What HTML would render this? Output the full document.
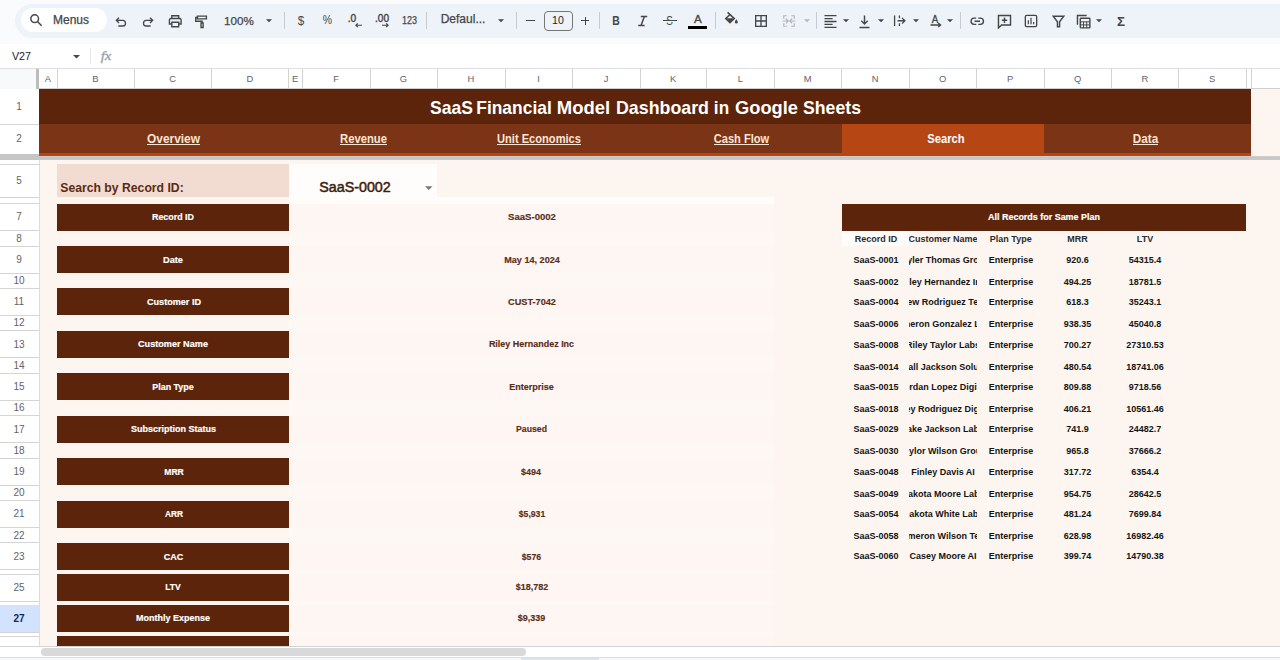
<!DOCTYPE html><html><head><meta charset="utf-8"><title>SaaS Financial Model Dashboard in Google Sheets</title><style>
*{margin:0;padding:0;box-sizing:border-box}
html,body{width:1280px;height:660px;overflow:hidden;background:#fdf6f0;font-family:"Liberation Sans",sans-serif}
#r{position:relative;width:1280px;height:660px;overflow:hidden}
#r div,#r svg{position:absolute}
.t{white-space:nowrap;text-align:center}
svg{overflow:visible}
</style></head><body><div id="r">
<div style="left:0px;top:0px;width:1280px;height:44px;background:#f9fbfd;"></div>
<div style="left:15px;top:3.5px;width:1280px;height:34.5px;background:#eef2f9;border-radius:17.25px 0 0 17.25px;"></div>
<div style="left:21px;top:8px;width:86px;height:24px;background:#fff;border-radius:12px;"></div>
<div style="left:0px;top:44px;width:1280px;height:24px;background:#fff;"></div>
<div style="left:0px;top:68px;width:1280px;height:592px;background:#fdf6f0;"></div>
<div style="left:0px;top:68px;width:1280px;height:20.5px;background:#fff;"></div>
<div style="left:0px;top:88.25px;width:1280px;height:0.75px;background:#cfcfcf;"></div>
<div style="left:0px;top:67.75px;width:1280px;height:1px;background:#dcdee1;"></div>
<div style="left:0px;top:68.5px;width:39px;height:592px;background:#fff;"></div>
<div style="left:56.5px;top:68.5px;width:1px;height:20px;background:#d3d3d3;"></div>
<div class="t" style="left:15.00px;top:71px;width:66px;height:15px;line-height:15px;font-size:9.4px;color:#5f6368;">A</div>
<div style="left:133.5px;top:68.5px;width:1px;height:20px;background:#d3d3d3;"></div>
<div class="t" style="left:62.50px;top:71px;width:66px;height:15px;line-height:15px;font-size:9.4px;color:#5f6368;">B</div>
<div style="left:211.0px;top:68.5px;width:1px;height:20px;background:#d3d3d3;"></div>
<div class="t" style="left:139.25px;top:71px;width:67px;height:15px;line-height:15px;font-size:9.4px;color:#5f6368;">C</div>
<div style="left:288.0px;top:68.5px;width:1px;height:20px;background:#d3d3d3;"></div>
<div class="t" style="left:216.50px;top:71px;width:67px;height:15px;line-height:15px;font-size:9.4px;color:#5f6368;">D</div>
<div style="left:301.5px;top:68.5px;width:1px;height:20px;background:#d3d3d3;"></div>
<div class="t" style="left:262.25px;top:71px;width:66px;height:15px;line-height:15px;font-size:9.4px;color:#5f6368;">E</div>
<div style="left:369.5px;top:68.5px;width:1px;height:20px;background:#d3d3d3;"></div>
<div class="t" style="left:303.00px;top:71px;width:66px;height:15px;line-height:15px;font-size:9.4px;color:#5f6368;">F</div>
<div style="left:436.5px;top:68.5px;width:1px;height:20px;background:#d3d3d3;"></div>
<div class="t" style="left:370.00px;top:71px;width:67px;height:15px;line-height:15px;font-size:9.4px;color:#5f6368;">G</div>
<div style="left:504.5px;top:68.5px;width:1px;height:20px;background:#d3d3d3;"></div>
<div class="t" style="left:437.50px;top:71px;width:67px;height:15px;line-height:15px;font-size:9.4px;color:#5f6368;">H</div>
<div style="left:571.5px;top:68.5px;width:1px;height:20px;background:#d3d3d3;"></div>
<div class="t" style="left:507.00px;top:71px;width:63px;height:15px;line-height:15px;font-size:9.4px;color:#5f6368;">I</div>
<div style="left:639.5px;top:68.5px;width:1px;height:20px;background:#d3d3d3;"></div>
<div class="t" style="left:573.50px;top:71px;width:65px;height:15px;line-height:15px;font-size:9.4px;color:#5f6368;">J</div>
<div style="left:706.0px;top:68.5px;width:1px;height:20px;background:#d3d3d3;"></div>
<div class="t" style="left:640.25px;top:71px;width:66px;height:15px;line-height:15px;font-size:9.4px;color:#5f6368;">K</div>
<div style="left:773.5px;top:68.5px;width:1px;height:20px;background:#d3d3d3;"></div>
<div class="t" style="left:707.75px;top:71px;width:65px;height:15px;line-height:15px;font-size:9.4px;color:#5f6368;">L</div>
<div style="left:841.0px;top:68.5px;width:1px;height:20px;background:#d3d3d3;"></div>
<div class="t" style="left:773.75px;top:71px;width:68px;height:15px;line-height:15px;font-size:9.4px;color:#5f6368;">M</div>
<div style="left:908.5px;top:68.5px;width:1px;height:20px;background:#d3d3d3;"></div>
<div class="t" style="left:841.75px;top:71px;width:67px;height:15px;line-height:15px;font-size:9.4px;color:#5f6368;">N</div>
<div style="left:976.0px;top:68.5px;width:1px;height:20px;background:#d3d3d3;"></div>
<div class="t" style="left:909.25px;top:71px;width:67px;height:15px;line-height:15px;font-size:9.4px;color:#5f6368;">O</div>
<div style="left:1043.5px;top:68.5px;width:1px;height:20px;background:#d3d3d3;"></div>
<div class="t" style="left:977.25px;top:71px;width:66px;height:15px;line-height:15px;font-size:9.4px;color:#5f6368;">P</div>
<div style="left:1111.0px;top:68.5px;width:1px;height:20px;background:#d3d3d3;"></div>
<div class="t" style="left:1044.25px;top:71px;width:67px;height:15px;line-height:15px;font-size:9.4px;color:#5f6368;">Q</div>
<div style="left:1178.0px;top:68.5px;width:1px;height:20px;background:#d3d3d3;"></div>
<div class="t" style="left:1111.50px;top:71px;width:67px;height:15px;line-height:15px;font-size:9.4px;color:#5f6368;">R</div>
<div style="left:1245.5px;top:68.5px;width:1px;height:20px;background:#d3d3d3;"></div>
<div class="t" style="left:1179.25px;top:71px;width:66px;height:15px;line-height:15px;font-size:9.4px;color:#5f6368;">S</div>
<div style="left:1250.5px;top:68.5px;width:1px;height:20px;background:#d3d3d3;"></div>
<div style="left:1289.5px;top:68.5px;width:1px;height:20px;background:#d3d3d3;"></div>
<div style="left:0px;top:68.5px;width:39px;height:20px;background:#f8f9fa;"></div>
<div style="left:36.25px;top:68.5px;width:2.5px;height:20.5px;background:#bdbdbd;"></div>
<div style="left:0px;top:123.5px;width:38.5px;height:1px;background:#d5d5d5;"></div>
<div class="t" style="left:-14.00px;top:99px;width:66px;height:15px;line-height:15px;font-size:10px;color:#5f6368;">1</div>
<div style="left:0px;top:153.5px;width:38.5px;height:1px;background:#d5d5d5;"></div>
<div class="t" style="left:-14.00px;top:131px;width:66px;height:15px;line-height:15px;font-size:10px;color:#5f6368;">2</div>
<div style="left:0px;top:164.0px;width:38.5px;height:1px;background:#d5d5d5;"></div>
<div style="left:0px;top:196.5px;width:38.5px;height:1px;background:#d5d5d5;"></div>
<div class="t" style="left:-14.00px;top:173px;width:66px;height:15px;line-height:15px;font-size:10px;color:#5f6368;">5</div>
<div style="left:0px;top:203.1px;width:38.5px;height:1px;background:#d5d5d5;"></div>
<div style="left:0px;top:230.1px;width:38.5px;height:1px;background:#d5d5d5;"></div>
<div class="t" style="left:-14.00px;top:209px;width:66px;height:15px;line-height:15px;font-size:10px;color:#5f6368;">7</div>
<div style="left:0px;top:245.52px;width:38.5px;height:1px;background:#d5d5d5;"></div>
<div class="t" style="left:-14.00px;top:231px;width:66px;height:15px;line-height:15px;font-size:10px;color:#5f6368;">8</div>
<div style="left:0px;top:272.52px;width:38.5px;height:1px;background:#d5d5d5;"></div>
<div class="t" style="left:-14.00px;top:252px;width:66px;height:15px;line-height:15px;font-size:10px;color:#5f6368;">9</div>
<div style="left:0px;top:287.94px;width:38.5px;height:1px;background:#d5d5d5;"></div>
<div class="t" style="left:-16.50px;top:273px;width:71px;height:15px;line-height:15px;font-size:10px;color:#5f6368;">10</div>
<div style="left:0px;top:314.94px;width:38.5px;height:1px;background:#d5d5d5;"></div>
<div class="t" style="left:-16.00px;top:294px;width:70px;height:15px;line-height:15px;font-size:10px;color:#5f6368;">11</div>
<div style="left:0px;top:330.36px;width:38.5px;height:1px;background:#d5d5d5;"></div>
<div class="t" style="left:-16.50px;top:315px;width:71px;height:15px;line-height:15px;font-size:10px;color:#5f6368;">12</div>
<div style="left:0px;top:357.36px;width:38.5px;height:1px;background:#d5d5d5;"></div>
<div class="t" style="left:-16.50px;top:337px;width:71px;height:15px;line-height:15px;font-size:10px;color:#5f6368;">13</div>
<div style="left:0px;top:372.78px;width:38.5px;height:1px;background:#d5d5d5;"></div>
<div class="t" style="left:-16.50px;top:358px;width:71px;height:15px;line-height:15px;font-size:10px;color:#5f6368;">14</div>
<div style="left:0px;top:399.78px;width:38.5px;height:1px;background:#d5d5d5;"></div>
<div class="t" style="left:-16.50px;top:379px;width:71px;height:15px;line-height:15px;font-size:10px;color:#5f6368;">15</div>
<div style="left:0px;top:415.2px;width:38.5px;height:1px;background:#d5d5d5;"></div>
<div class="t" style="left:-16.50px;top:400px;width:71px;height:15px;line-height:15px;font-size:10px;color:#5f6368;">16</div>
<div style="left:0px;top:442.2px;width:38.5px;height:1px;background:#d5d5d5;"></div>
<div class="t" style="left:-16.50px;top:422px;width:71px;height:15px;line-height:15px;font-size:10px;color:#5f6368;">17</div>
<div style="left:0px;top:457.62px;width:38.5px;height:1px;background:#d5d5d5;"></div>
<div class="t" style="left:-16.50px;top:443px;width:71px;height:15px;line-height:15px;font-size:10px;color:#5f6368;">18</div>
<div style="left:0px;top:484.62px;width:38.5px;height:1px;background:#d5d5d5;"></div>
<div class="t" style="left:-16.50px;top:464px;width:71px;height:15px;line-height:15px;font-size:10px;color:#5f6368;">19</div>
<div style="left:0px;top:500.04px;width:38.5px;height:1px;background:#d5d5d5;"></div>
<div class="t" style="left:-16.50px;top:485px;width:71px;height:15px;line-height:15px;font-size:10px;color:#5f6368;">20</div>
<div style="left:0px;top:527.04px;width:38.5px;height:1px;background:#d5d5d5;"></div>
<div class="t" style="left:-16.50px;top:506px;width:71px;height:15px;line-height:15px;font-size:10px;color:#5f6368;">21</div>
<div style="left:0px;top:542.46px;width:38.5px;height:1px;background:#d5d5d5;"></div>
<div class="t" style="left:-16.50px;top:528px;width:71px;height:15px;line-height:15px;font-size:10px;color:#5f6368;">22</div>
<div style="left:0px;top:569.46px;width:38.5px;height:1px;background:#d5d5d5;"></div>
<div class="t" style="left:-16.50px;top:549px;width:71px;height:15px;line-height:15px;font-size:10px;color:#5f6368;">23</div>
<div style="left:0px;top:573.5px;width:38.5px;height:1px;background:#d5d5d5;"></div>
<div style="left:0px;top:600.5px;width:38.5px;height:1px;background:#d5d5d5;"></div>
<div class="t" style="left:-16.50px;top:580px;width:71px;height:15px;line-height:15px;font-size:10px;color:#5f6368;">25</div>
<div style="left:0px;top:604.5px;width:38.5px;height:1px;background:#d5d5d5;"></div>
<div style="left:0px;top:605px;width:38.5px;height:27px;background:#d3e3fd;"></div>
<div style="left:0px;top:631.5px;width:38.5px;height:1px;background:#d5d5d5;"></div>
<div class="t" style="left:-16.50px;top:611px;width:71px;height:15px;line-height:15px;font-size:10px;font-weight:bold;color:#0b2a5c;">27</div>
<div style="left:0px;top:635.5px;width:38.5px;height:1px;background:#d5d5d5;"></div>
<div style="left:0px;top:659.5px;width:38.5px;height:1px;background:#d5d5d5;"></div>
<div style="left:38.5px;top:89px;width:1px;height:571px;background:#dcdcdc;"></div>
<div style="left:39px;top:89px;width:1211.5px;height:35px;background:#5b240b;"></div>
<div class="t" style="left:399.99px;top:95px;width:103px;height:25px;line-height:25px;font-size:18.4px;font-weight:bold;color:#fff;transform:scaleX(0.955);">SaaS</div>
<div class="t" style="left:446.26px;top:95px;width:136px;height:25px;line-height:25px;font-size:18.4px;font-weight:bold;color:#fff;transform:scaleX(0.947);">Financial</div>
<div class="t" style="left:527.24px;top:95px;width:113px;height:25px;line-height:25px;font-size:18.4px;font-weight:bold;color:#fff;transform:scaleX(1.006);">Model</div>
<div class="t" style="left:585.52px;top:95px;width:153px;height:25px;line-height:25px;font-size:18.4px;font-weight:bold;color:#fff;transform:scaleX(0.968);">Dashboard</div>
<div class="t" style="left:684.34px;top:95px;width:75px;height:25px;line-height:25px;font-size:18.4px;font-weight:bold;color:#fff;transform:scaleX(0.935);">in</div>
<div class="t" style="left:704.50px;top:95px;width:123px;height:25px;line-height:25px;font-size:18.4px;font-weight:bold;color:#fff;transform:scaleX(0.994);">Google</div>
<div class="t" style="left:772.99px;top:95px;width:118px;height:25px;line-height:25px;font-size:18.4px;font-weight:bold;color:#fff;transform:scaleX(0.961);">Sheets</div>
<div style="left:39px;top:124px;width:1211.5px;height:31px;background:#7b3415;"></div>
<div style="left:841.5px;top:124px;width:202.5px;height:31px;background:#b64714;"></div>
<div style="left:39px;top:152.5px;width:1211.5px;height:3px;background:#b64714;"></div>
<div class="t" style="left:117.00px;top:130px;width:113px;height:18px;line-height:18px;font-size:12.48px;font-weight:bold;color:#fbe5d6;transform:scaleX(0.955);">Overview</div>
<div style="left:147px;top:144.2px;width:53px;height:1px;background:#fbe5d6;"></div>
<div class="t" style="left:310.00px;top:130px;width:107px;height:18px;line-height:18px;font-size:12.15px;font-weight:bold;color:#fbe5d6;transform:scaleX(0.928);">Revenue</div>
<div style="left:340px;top:144.2px;width:47px;height:1px;background:#fbe5d6;"></div>
<div class="t" style="left:467.01px;top:130px;width:144px;height:18px;line-height:18px;font-size:12.06px;font-weight:bold;color:#fbe5d6;transform:scaleX(0.922);">Unit Economics</div>
<div style="left:497px;top:144.2px;width:84px;height:1px;background:#fbe5d6;"></div>
<div class="t" style="left:683.75px;top:130px;width:115px;height:18px;line-height:18px;font-size:12.05px;font-weight:bold;color:#fbe5d6;transform:scaleX(0.921);">Cash Flow</div>
<div style="left:713.5px;top:144.2px;width:55.5px;height:1px;background:#fbe5d6;"></div>
<div class="t" style="left:896.75px;top:130px;width:98px;height:18px;line-height:18px;font-size:12.13px;font-weight:bold;color:#fff;transform:scaleX(0.927);">Search</div>
<div class="t" style="left:1102.72px;top:130px;width:85px;height:18px;line-height:18px;font-size:12.39px;font-weight:bold;color:#fbe5d6;transform:scaleX(0.947);">Data</div>
<div style="left:1132.5px;top:144.2px;width:25.5px;height:1px;background:#fbe5d6;"></div>
<div style="left:0px;top:155.6px;width:1280px;height:4.1px;background:#c8c8c8;background:linear-gradient(#d6d0cd,#c6c6c6 35%,#cbcbcb);"></div>
<div style="left:0px;top:154px;width:39px;height:5.7px;background:#c6c6c6;"></div>
<div style="left:57px;top:164.2px;width:231.5px;height:32.4px;background:#f2dcd1;"></div>
<div class="t" style="left:30.27px;top:178px;width:184px;height:19px;line-height:19px;font-size:13.32px;font-weight:bold;color:#5b2a14;transform:scaleX(0.917);">Search by Record ID:</div>
<div style="left:288.5px;top:164.2px;width:148.5px;height:32.4px;background:#fffdfc;"></div>
<div class="t" style="left:288.77px;top:177px;width:132px;height:20px;line-height:20px;font-size:14.41px;color:#3e1c0e;transform:scaleX(0.992);-webkit-text-stroke:0.5px #3e1c0e;">SaaS-0002</div>
<svg style="left:425px;top:186px" width="7.5" height="4" viewBox="0 0 8 4"><path d="M0 0h8l-4 4z" fill="#777"/></svg>
<div style="left:288.5px;top:197px;width:485.5px;height:450px;background:#fef8f4;"></div>
<div style="left:288.5px;top:196.5px;width:485.5px;height:7.1px;background:#fffcfa;"></div>
<div style="left:288.5px;top:203.6px;width:485.5px;height:27.0px;background:#fef6f2;"></div>
<div style="left:57px;top:203.6px;width:231.5px;height:27.0px;background:#5b240b;"></div>
<div class="t" style="left:122.49px;top:209px;width:102px;height:15px;line-height:15px;font-size:9.8px;font-weight:bold;color:#fff;transform:scaleX(0.907);-webkit-text-stroke:0.2px #fff;">Record ID</div>
<div class="t" style="left:477.71px;top:209px;width:108px;height:15px;line-height:15px;font-size:9.8px;font-weight:bold;color:#5b2c17;transform:scaleX(0.975);-webkit-text-stroke:0.15px #5b2c17;">SaaS-0002</div>
<div style="left:288.5px;top:246.02px;width:485.5px;height:26.99999999999997px;background:#fef6f2;"></div>
<div style="left:57px;top:246.02px;width:231.5px;height:26.99999999999997px;background:#5b240b;"></div>
<div class="t" style="left:133.49px;top:252px;width:80px;height:15px;line-height:15px;font-size:9.8px;font-weight:bold;color:#fff;transform:scaleX(0.941);-webkit-text-stroke:0.2px #fff;">Date</div>
<div class="t" style="left:473.54px;top:252px;width:116px;height:15px;line-height:15px;font-size:9.8px;font-weight:bold;color:#5b2c17;transform:scaleX(0.929);-webkit-text-stroke:0.15px #5b2c17;">May 14, 2024</div>
<div style="left:288.5px;top:288.44px;width:485.5px;height:27.0px;background:#fef6f2;"></div>
<div style="left:57px;top:288.44px;width:231.5px;height:27.0px;background:#5b240b;"></div>
<div class="t" style="left:116.51px;top:294px;width:114px;height:15px;line-height:15px;font-size:9.8px;font-weight:bold;color:#fff;transform:scaleX(0.927);-webkit-text-stroke:0.2px #fff;">Customer ID</div>
<div class="t" style="left:477.59px;top:294px;width:108px;height:15px;line-height:15px;font-size:9.8px;font-weight:bold;color:#5b2c17;transform:scaleX(0.937);-webkit-text-stroke:0.15px #5b2c17;">CUST-7042</div>
<div style="left:288.5px;top:330.86px;width:485.5px;height:27.0px;background:#fef6f2;"></div>
<div style="left:57px;top:330.86px;width:231.5px;height:27.0px;background:#5b240b;"></div>
<div class="t" style="left:108.49px;top:336px;width:130px;height:15px;line-height:15px;font-size:9.8px;font-weight:bold;color:#fff;transform:scaleX(0.931);-webkit-text-stroke:0.2px #fff;">Customer Name</div>
<div class="t" style="left:459.11px;top:336px;width:145px;height:15px;line-height:15px;font-size:9.8px;font-weight:bold;color:#5b2c17;transform:scaleX(0.915);-webkit-text-stroke:0.15px #5b2c17;">Riley Hernandez Inc</div>
<div style="left:288.5px;top:373.28px;width:485.5px;height:27.0px;background:#fef6f2;"></div>
<div style="left:57px;top:373.28px;width:231.5px;height:27.0px;background:#5b240b;"></div>
<div class="t" style="left:122.25px;top:379px;width:102px;height:15px;line-height:15px;font-size:9.8px;font-weight:bold;color:#fff;transform:scaleX(0.911);-webkit-text-stroke:0.2px #fff;">Plan Type</div>
<div class="t" style="left:479.20px;top:379px;width:105px;height:15px;line-height:15px;font-size:9.8px;font-weight:bold;color:#5b2c17;transform:scaleX(0.92);-webkit-text-stroke:0.15px #5b2c17;">Enterprise</div>
<div style="left:288.5px;top:415.7px;width:485.5px;height:27.0px;background:#fef6f2;"></div>
<div style="left:57px;top:415.7px;width:231.5px;height:27.0px;background:#5b240b;"></div>
<div class="t" style="left:100.99px;top:421px;width:145px;height:15px;line-height:15px;font-size:9.8px;font-weight:bold;color:#fff;transform:scaleX(0.918);-webkit-text-stroke:0.2px #fff;">Subscription Status</div>
<div class="t" style="left:486.00px;top:421px;width:91px;height:15px;line-height:15px;font-size:9.8px;font-weight:bold;color:#5b2c17;transform:scaleX(0.889);-webkit-text-stroke:0.15px #5b2c17;">Paused</div>
<div style="left:288.5px;top:458.12px;width:485.5px;height:27.0px;background:#fef6f2;"></div>
<div style="left:57px;top:458.12px;width:231.5px;height:27.0px;background:#5b240b;"></div>
<div class="t" style="left:133.75px;top:464px;width:80px;height:15px;line-height:15px;font-size:9.8px;font-weight:bold;color:#fff;transform:scaleX(0.874);-webkit-text-stroke:0.2px #fff;">MRR</div>
<div class="t" style="left:491.00px;top:464px;width:80px;height:15px;line-height:15px;font-size:9.8px;font-weight:bold;color:#5b2c17;transform:scaleX(0.917);-webkit-text-stroke:0.15px #5b2c17;">$494</div>
<div style="left:288.5px;top:500.54px;width:485.5px;height:26.999999999999943px;background:#fef6f2;"></div>
<div style="left:57px;top:500.54px;width:231.5px;height:26.999999999999943px;background:#5b240b;"></div>
<div class="t" style="left:134.50px;top:506px;width:78px;height:15px;line-height:15px;font-size:9.8px;font-weight:bold;color:#fff;transform:scaleX(0.848);-webkit-text-stroke:0.2px #fff;">ARR</div>
<div class="t" style="left:488.75px;top:506px;width:86px;height:15px;line-height:15px;font-size:9.8px;font-weight:bold;color:#5b2c17;transform:scaleX(0.884);-webkit-text-stroke:0.15px #5b2c17;">$5,931</div>
<div style="left:288.5px;top:542.96px;width:485.5px;height:27.0px;background:#fef6f2;"></div>
<div style="left:57px;top:542.96px;width:231.5px;height:27.0px;background:#5b240b;"></div>
<div class="t" style="left:134.25px;top:549px;width:79px;height:15px;line-height:15px;font-size:9.8px;font-weight:bold;color:#fff;transform:scaleX(0.918);-webkit-text-stroke:0.2px #fff;">CAC</div>
<div class="t" style="left:491.75px;top:549px;width:79px;height:15px;line-height:15px;font-size:9.8px;font-weight:bold;color:#5b2c17;transform:scaleX(0.894);-webkit-text-stroke:0.15px #5b2c17;">$576</div>
<div style="left:288.5px;top:573.8px;width:485.5px;height:27.0px;background:#fef6f2;"></div>
<div style="left:57px;top:573.8px;width:231.5px;height:27.0px;background:#5b240b;"></div>
<div class="t" style="left:135.25px;top:579px;width:76px;height:15px;line-height:15px;font-size:9.8px;font-weight:bold;color:#fff;transform:scaleX(0.872);-webkit-text-stroke:0.2px #fff;">LTV</div>
<div class="t" style="left:485.74px;top:579px;width:92px;height:15px;line-height:15px;font-size:9.8px;font-weight:bold;color:#5b2c17;transform:scaleX(0.917);-webkit-text-stroke:0.15px #5b2c17;">$18,782</div>
<div style="left:288.5px;top:604.7px;width:485.5px;height:27.0px;background:#fef6f2;"></div>
<div style="left:57px;top:604.7px;width:231.5px;height:27.0px;background:#5b240b;"></div>
<div class="t" style="left:106.49px;top:610px;width:134px;height:15px;line-height:15px;font-size:9.8px;font-weight:bold;color:#fff;transform:scaleX(0.918);-webkit-text-stroke:0.2px #fff;">Monthly Expense</div>
<div class="t" style="left:488.24px;top:610px;width:87px;height:15px;line-height:15px;font-size:9.8px;font-weight:bold;color:#5b2c17;transform:scaleX(0.917);-webkit-text-stroke:0.15px #5b2c17;">$9,339</div>
<div style="left:288.5px;top:636px;width:485.5px;height:27px;background:#fef6f2;"></div>
<div style="left:57px;top:636px;width:231.5px;height:27px;background:#5b240b;"></div>
<div class="t" style="left:106.02px;top:642px;width:135px;height:15px;line-height:15px;font-size:9.8px;font-weight:bold;color:#fff;transform:scaleX(0.957);-webkit-text-stroke:0.2px #fff;">Payment Method</div>
<div class="t" style="left:467.99px;top:642px;width:127px;height:15px;line-height:15px;font-size:9.8px;font-weight:bold;color:#5b2c17;transform:scaleX(1.071);-webkit-text-stroke:0.15px #5b2c17;">Wire Transfer</div>
<div style="left:841.5px;top:203.75px;width:404.5px;height:27px;background:#5b240b;"></div>
<div class="t" style="left:958.00px;top:209px;width:172px;height:15px;line-height:15px;font-size:9.6px;font-weight:bold;color:#fff;transform:scaleX(0.932);-webkit-text-stroke:0.2px #fff;">All Records for Same Plan</div>
<div style="left:841.5px;top:231px;width:67.5px;height:15px;background:#fffdfc;"></div>
<div class="t" style="left:824.50px;top:232.2px;width:103px;height:14px;line-height:14px;font-size:9px;font-weight:bold;color:#2b2b2b;transform:scaleY(1.09);">Record ID</div>
<div class="t" style="left:959.80px;top:232.2px;width:102px;height:14px;line-height:14px;font-size:9px;font-weight:bold;color:#2b2b2b;transform:scaleY(1.09);">Plan Type</div>
<div class="t" style="left:1037.50px;top:232.2px;width:80px;height:14px;line-height:14px;font-size:9px;font-weight:bold;color:#2b2b2b;transform:scaleY(1.09);">MRR</div>
<div class="t" style="left:1107.00px;top:232.2px;width:76px;height:14px;line-height:14px;font-size:9px;font-weight:bold;color:#2b2b2b;transform:scaleY(1.09);">LTV</div>
<div style="left:909px;top:232.20px;width:68px;height:14px;overflow:hidden"><div class="t" style="left:-66px;top:0;width:200px;height:14px;line-height:14px;font-size:9px;font-weight:bold;color:#2b2b2b;transform:scaleY(1.09);">Customer Name</div></div>
<div class="t" style="left:823.50px;top:252.6px;width:105px;height:14px;line-height:14px;font-size:9px;font-weight:bold;color:#141414;transform:scaleY(1.09);">SaaS-0001</div>
<div style="left:909px;top:252.60px;width:68px;height:14px;overflow:hidden"><div class="t" style="left:-66px;top:0;width:200px;height:14px;line-height:14px;font-size:9px;font-weight:bold;color:#141414;transform:scaleY(1.09);">Skyler Thomas Group</div></div>
<div class="t" style="left:958.50px;top:252.6px;width:105px;height:14px;line-height:14px;font-size:9px;font-weight:bold;color:#141414;transform:scaleY(1.09);">Enterprise</div>
<div class="t" style="left:1036.00px;top:252.6px;width:83px;height:14px;line-height:14px;font-size:9px;font-weight:bold;color:#141414;transform:scaleY(1.09);">920.6</div>
<div class="t" style="left:1098.50px;top:252.6px;width:93px;height:14px;line-height:14px;font-size:9px;font-weight:bold;color:#141414;transform:scaleY(1.09);">54315.4</div>
<div class="t" style="left:823.50px;top:274.6px;width:105px;height:14px;line-height:14px;font-size:9px;font-weight:bold;color:#141414;transform:scaleY(1.09);">SaaS-0002</div>
<div style="left:909px;top:274.60px;width:68px;height:14px;overflow:hidden"><div class="t" style="left:-66px;top:0;width:200px;height:14px;line-height:14px;font-size:9px;font-weight:bold;color:#141414;transform:scaleY(1.09);">Riley Hernandez Inc</div></div>
<div class="t" style="left:958.50px;top:274.6px;width:105px;height:14px;line-height:14px;font-size:9px;font-weight:bold;color:#141414;transform:scaleY(1.09);">Enterprise</div>
<div class="t" style="left:1033.50px;top:274.6px;width:88px;height:14px;line-height:14px;font-size:9px;font-weight:bold;color:#141414;transform:scaleY(1.09);">494.25</div>
<div class="t" style="left:1098.50px;top:274.6px;width:93px;height:14px;line-height:14px;font-size:9px;font-weight:bold;color:#141414;transform:scaleY(1.09);">18781.5</div>
<div class="t" style="left:823.50px;top:294.6px;width:105px;height:14px;line-height:14px;font-size:9px;font-weight:bold;color:#141414;transform:scaleY(1.09);">SaaS-0004</div>
<div style="left:909px;top:294.60px;width:68px;height:14px;overflow:hidden"><div class="t" style="left:-66px;top:0;width:200px;height:14px;line-height:14px;font-size:9px;font-weight:bold;color:#141414;transform:scaleY(1.09);">Drew Rodriguez Tech</div></div>
<div class="t" style="left:958.50px;top:294.6px;width:105px;height:14px;line-height:14px;font-size:9px;font-weight:bold;color:#141414;transform:scaleY(1.09);">Enterprise</div>
<div class="t" style="left:1036.00px;top:294.6px;width:83px;height:14px;line-height:14px;font-size:9px;font-weight:bold;color:#141414;transform:scaleY(1.09);">618.3</div>
<div class="t" style="left:1098.50px;top:294.6px;width:93px;height:14px;line-height:14px;font-size:9px;font-weight:bold;color:#141414;transform:scaleY(1.09);">35243.1</div>
<div class="t" style="left:823.50px;top:316.6px;width:105px;height:14px;line-height:14px;font-size:9px;font-weight:bold;color:#141414;transform:scaleY(1.09);">SaaS-0006</div>
<div style="left:909px;top:316.60px;width:68px;height:14px;overflow:hidden"><div class="t" style="left:-66px;top:0;width:200px;height:14px;line-height:14px;font-size:9px;font-weight:bold;color:#141414;transform:scaleY(1.09);">Cameron Gonzalez Labs</div></div>
<div class="t" style="left:958.50px;top:316.6px;width:105px;height:14px;line-height:14px;font-size:9px;font-weight:bold;color:#141414;transform:scaleY(1.09);">Enterprise</div>
<div class="t" style="left:1033.50px;top:316.6px;width:88px;height:14px;line-height:14px;font-size:9px;font-weight:bold;color:#141414;transform:scaleY(1.09);">938.35</div>
<div class="t" style="left:1098.50px;top:316.6px;width:93px;height:14px;line-height:14px;font-size:9px;font-weight:bold;color:#141414;transform:scaleY(1.09);">45040.8</div>
<div class="t" style="left:823.50px;top:337.6px;width:105px;height:14px;line-height:14px;font-size:9px;font-weight:bold;color:#141414;transform:scaleY(1.09);">SaaS-0008</div>
<div style="left:909px;top:337.60px;width:68px;height:14px;overflow:hidden"><div class="t" style="left:-66px;top:0;width:200px;height:14px;line-height:14px;font-size:9px;font-weight:bold;color:#141414;transform:scaleY(1.09);">Riley Taylor Labs</div></div>
<div class="t" style="left:958.50px;top:337.6px;width:105px;height:14px;line-height:14px;font-size:9px;font-weight:bold;color:#141414;transform:scaleY(1.09);">Enterprise</div>
<div class="t" style="left:1033.50px;top:337.6px;width:88px;height:14px;line-height:14px;font-size:9px;font-weight:bold;color:#141414;transform:scaleY(1.09);">700.27</div>
<div class="t" style="left:1096.00px;top:337.6px;width:98px;height:14px;line-height:14px;font-size:9px;font-weight:bold;color:#141414;transform:scaleY(1.09);">27310.53</div>
<div class="t" style="left:823.50px;top:359.6px;width:105px;height:14px;line-height:14px;font-size:9px;font-weight:bold;color:#141414;transform:scaleY(1.09);">SaaS-0014</div>
<div style="left:909px;top:359.60px;width:68px;height:14px;overflow:hidden"><div class="t" style="left:-66px;top:0;width:200px;height:14px;line-height:14px;font-size:9px;font-weight:bold;color:#141414;transform:scaleY(1.09);">Kendall Jackson Solutions</div></div>
<div class="t" style="left:958.50px;top:359.6px;width:105px;height:14px;line-height:14px;font-size:9px;font-weight:bold;color:#141414;transform:scaleY(1.09);">Enterprise</div>
<div class="t" style="left:1033.50px;top:359.6px;width:88px;height:14px;line-height:14px;font-size:9px;font-weight:bold;color:#141414;transform:scaleY(1.09);">480.54</div>
<div class="t" style="left:1096.00px;top:359.6px;width:98px;height:14px;line-height:14px;font-size:9px;font-weight:bold;color:#141414;transform:scaleY(1.09);">18741.06</div>
<div class="t" style="left:823.50px;top:379.6px;width:105px;height:14px;line-height:14px;font-size:9px;font-weight:bold;color:#141414;transform:scaleY(1.09);">SaaS-0015</div>
<div style="left:909px;top:379.60px;width:68px;height:14px;overflow:hidden"><div class="t" style="left:-66px;top:0;width:200px;height:14px;line-height:14px;font-size:9px;font-weight:bold;color:#141414;transform:scaleY(1.09);">Jordan Lopez Digital</div></div>
<div class="t" style="left:958.50px;top:379.6px;width:105px;height:14px;line-height:14px;font-size:9px;font-weight:bold;color:#141414;transform:scaleY(1.09);">Enterprise</div>
<div class="t" style="left:1033.50px;top:379.6px;width:88px;height:14px;line-height:14px;font-size:9px;font-weight:bold;color:#141414;transform:scaleY(1.09);">809.88</div>
<div class="t" style="left:1098.50px;top:379.6px;width:93px;height:14px;line-height:14px;font-size:9px;font-weight:bold;color:#141414;transform:scaleY(1.09);">9718.56</div>
<div class="t" style="left:823.50px;top:401.6px;width:105px;height:14px;line-height:14px;font-size:9px;font-weight:bold;color:#141414;transform:scaleY(1.09);">SaaS-0018</div>
<div style="left:909px;top:401.60px;width:68px;height:14px;overflow:hidden"><div class="t" style="left:-66px;top:0;width:200px;height:14px;line-height:14px;font-size:9px;font-weight:bold;color:#141414;transform:scaleY(1.09);">Riley Rodriguez Digital</div></div>
<div class="t" style="left:958.50px;top:401.6px;width:105px;height:14px;line-height:14px;font-size:9px;font-weight:bold;color:#141414;transform:scaleY(1.09);">Enterprise</div>
<div class="t" style="left:1033.50px;top:401.6px;width:88px;height:14px;line-height:14px;font-size:9px;font-weight:bold;color:#141414;transform:scaleY(1.09);">406.21</div>
<div class="t" style="left:1096.00px;top:401.6px;width:98px;height:14px;line-height:14px;font-size:9px;font-weight:bold;color:#141414;transform:scaleY(1.09);">10561.46</div>
<div class="t" style="left:823.50px;top:421.6px;width:105px;height:14px;line-height:14px;font-size:9px;font-weight:bold;color:#141414;transform:scaleY(1.09);">SaaS-0029</div>
<div style="left:909px;top:421.60px;width:68px;height:14px;overflow:hidden"><div class="t" style="left:-66px;top:0;width:200px;height:14px;line-height:14px;font-size:9px;font-weight:bold;color:#141414;transform:scaleY(1.09);">Jake Jackson Labs</div></div>
<div class="t" style="left:958.50px;top:421.6px;width:105px;height:14px;line-height:14px;font-size:9px;font-weight:bold;color:#141414;transform:scaleY(1.09);">Enterprise</div>
<div class="t" style="left:1036.00px;top:421.6px;width:83px;height:14px;line-height:14px;font-size:9px;font-weight:bold;color:#141414;transform:scaleY(1.09);">741.9</div>
<div class="t" style="left:1098.50px;top:421.6px;width:93px;height:14px;line-height:14px;font-size:9px;font-weight:bold;color:#141414;transform:scaleY(1.09);">24482.7</div>
<div class="t" style="left:823.50px;top:443.6px;width:105px;height:14px;line-height:14px;font-size:9px;font-weight:bold;color:#141414;transform:scaleY(1.09);">SaaS-0030</div>
<div style="left:909px;top:443.60px;width:68px;height:14px;overflow:hidden"><div class="t" style="left:-66px;top:0;width:200px;height:14px;line-height:14px;font-size:9px;font-weight:bold;color:#141414;transform:scaleY(1.09);">Taylor Wilson Group</div></div>
<div class="t" style="left:958.50px;top:443.6px;width:105px;height:14px;line-height:14px;font-size:9px;font-weight:bold;color:#141414;transform:scaleY(1.09);">Enterprise</div>
<div class="t" style="left:1036.00px;top:443.6px;width:83px;height:14px;line-height:14px;font-size:9px;font-weight:bold;color:#141414;transform:scaleY(1.09);">965.8</div>
<div class="t" style="left:1098.50px;top:443.6px;width:93px;height:14px;line-height:14px;font-size:9px;font-weight:bold;color:#141414;transform:scaleY(1.09);">37666.2</div>
<div class="t" style="left:823.50px;top:464.6px;width:105px;height:14px;line-height:14px;font-size:9px;font-weight:bold;color:#141414;transform:scaleY(1.09);">SaaS-0048</div>
<div style="left:909px;top:464.60px;width:68px;height:14px;overflow:hidden"><div class="t" style="left:-66px;top:0;width:200px;height:14px;line-height:14px;font-size:9px;font-weight:bold;color:#141414;transform:scaleY(1.09);">Finley Davis AI</div></div>
<div class="t" style="left:958.50px;top:464.6px;width:105px;height:14px;line-height:14px;font-size:9px;font-weight:bold;color:#141414;transform:scaleY(1.09);">Enterprise</div>
<div class="t" style="left:1033.50px;top:464.6px;width:88px;height:14px;line-height:14px;font-size:9px;font-weight:bold;color:#141414;transform:scaleY(1.09);">317.72</div>
<div class="t" style="left:1101.00px;top:464.6px;width:88px;height:14px;line-height:14px;font-size:9px;font-weight:bold;color:#141414;transform:scaleY(1.09);">6354.4</div>
<div class="t" style="left:823.50px;top:486.6px;width:105px;height:14px;line-height:14px;font-size:9px;font-weight:bold;color:#141414;transform:scaleY(1.09);">SaaS-0049</div>
<div style="left:909px;top:486.60px;width:68px;height:14px;overflow:hidden"><div class="t" style="left:-66px;top:0;width:200px;height:14px;line-height:14px;font-size:9px;font-weight:bold;color:#141414;transform:scaleY(1.09);">Dakota Moore Labs</div></div>
<div class="t" style="left:958.50px;top:486.6px;width:105px;height:14px;line-height:14px;font-size:9px;font-weight:bold;color:#141414;transform:scaleY(1.09);">Enterprise</div>
<div class="t" style="left:1033.50px;top:486.6px;width:88px;height:14px;line-height:14px;font-size:9px;font-weight:bold;color:#141414;transform:scaleY(1.09);">954.75</div>
<div class="t" style="left:1098.50px;top:486.6px;width:93px;height:14px;line-height:14px;font-size:9px;font-weight:bold;color:#141414;transform:scaleY(1.09);">28642.5</div>
<div class="t" style="left:823.50px;top:506.6px;width:105px;height:14px;line-height:14px;font-size:9px;font-weight:bold;color:#141414;transform:scaleY(1.09);">SaaS-0054</div>
<div style="left:909px;top:506.60px;width:68px;height:14px;overflow:hidden"><div class="t" style="left:-66px;top:0;width:200px;height:14px;line-height:14px;font-size:9px;font-weight:bold;color:#141414;transform:scaleY(1.09);">Dakota White Labs</div></div>
<div class="t" style="left:958.50px;top:506.6px;width:105px;height:14px;line-height:14px;font-size:9px;font-weight:bold;color:#141414;transform:scaleY(1.09);">Enterprise</div>
<div class="t" style="left:1033.50px;top:506.6px;width:88px;height:14px;line-height:14px;font-size:9px;font-weight:bold;color:#141414;transform:scaleY(1.09);">481.24</div>
<div class="t" style="left:1098.50px;top:506.6px;width:93px;height:14px;line-height:14px;font-size:9px;font-weight:bold;color:#141414;transform:scaleY(1.09);">7699.84</div>
<div class="t" style="left:823.50px;top:528.6px;width:105px;height:14px;line-height:14px;font-size:9px;font-weight:bold;color:#141414;transform:scaleY(1.09);">SaaS-0058</div>
<div style="left:909px;top:528.60px;width:68px;height:14px;overflow:hidden"><div class="t" style="left:-66px;top:0;width:200px;height:14px;line-height:14px;font-size:9px;font-weight:bold;color:#141414;transform:scaleY(1.09);">Cameron Wilson Tech</div></div>
<div class="t" style="left:958.50px;top:528.6px;width:105px;height:14px;line-height:14px;font-size:9px;font-weight:bold;color:#141414;transform:scaleY(1.09);">Enterprise</div>
<div class="t" style="left:1033.50px;top:528.6px;width:88px;height:14px;line-height:14px;font-size:9px;font-weight:bold;color:#141414;transform:scaleY(1.09);">628.98</div>
<div class="t" style="left:1096.00px;top:528.6px;width:98px;height:14px;line-height:14px;font-size:9px;font-weight:bold;color:#141414;transform:scaleY(1.09);">16982.46</div>
<div class="t" style="left:823.50px;top:548.6px;width:105px;height:14px;line-height:14px;font-size:9px;font-weight:bold;color:#141414;transform:scaleY(1.09);">SaaS-0060</div>
<div style="left:909px;top:548.60px;width:68px;height:14px;overflow:hidden"><div class="t" style="left:-66px;top:0;width:200px;height:14px;line-height:14px;font-size:9px;font-weight:bold;color:#141414;transform:scaleY(1.09);">Casey Moore AI</div></div>
<div class="t" style="left:958.50px;top:548.6px;width:105px;height:14px;line-height:14px;font-size:9px;font-weight:bold;color:#141414;transform:scaleY(1.09);">Enterprise</div>
<div class="t" style="left:1033.50px;top:548.6px;width:88px;height:14px;line-height:14px;font-size:9px;font-weight:bold;color:#141414;transform:scaleY(1.09);">399.74</div>
<div class="t" style="left:1096.00px;top:548.6px;width:98px;height:14px;line-height:14px;font-size:9px;font-weight:bold;color:#141414;transform:scaleY(1.09);">14790.38</div>
<div style="left:0px;top:646.3px;width:1280px;height:14px;background:#fff;"></div>
<div style="left:0px;top:646.2px;width:1280px;height:0.8px;background:#d4d4d4;"></div>
<div style="left:0px;top:657.3px;width:1280px;height:3px;background:#f6f8fb;"></div>
<div style="left:0px;top:656.8px;width:1280px;height:0.8px;background:#dcdee1;"></div>
<div style="left:520.5px;top:657.6px;width:78.5px;height:3px;background:#dde3ea;"></div>
<div style="left:41px;top:647.5px;width:484.5px;height:8px;background:#d9d9d9;border-radius:4px;"></div>
<svg style="left:28.20px;top:12.00px" width="16" height="16" viewBox="0 0 24 24" fill="none" stroke="#444746" stroke-width="2" stroke-linejoin="miter"><circle cx="10" cy="10" r="5.800" stroke-width="2.200"/><path d="M14.500 14.500L20.500 20.500" stroke-width="2.200"/></svg>
<div class="t" style="left:22.51px;top:11px;width:96px;height:18px;line-height:18px;font-size:12.12px;color:#444746;transform:scaleX(0.99);-webkit-text-stroke:0.25px #444746;">Menus</div>
<svg style="left:113.20px;top:13.90px" width="16" height="16" viewBox="0 0 24 24" fill="none" stroke="#444746" stroke-width="2" stroke-linejoin="miter"><path d="M9 5.500L5 9.500l4 4M5.500 9.500h9a4.250 4.250 0 0 1 0 8.500H8"/></svg>
<svg style="left:139.80px;top:13.90px" width="16" height="16" viewBox="0 0 24 24" fill="none" stroke="#444746" stroke-width="2" stroke-linejoin="miter"><path d="M15 5.500L19 9.500l-4 4M18.500 9.500h-9a4.250 4.250 0 0 0 0 8.500H16"/></svg>
<svg style="left:166.75px;top:12.55px" width="16.5" height="16.5" viewBox="0 0 24 24" fill="none" stroke="#444746" stroke-width="2" stroke-linejoin="miter"><path d="M7 8V4h10v4M7 16H3.500v-6a2 2 0 0 1 2-2h13a2 2 0 0 1 2 2v6H17M7 13.500h10V20H7z"/></svg>
<svg style="left:192.95px;top:13.05px" width="16.5" height="16.5" viewBox="0 0 24 24" fill="none" stroke="#444746" stroke-width="2" stroke-linejoin="miter"><path d="M6.500 4.500h13v4h-13zM6.500 6.500H4v5.500h9.200V14.500M11.700 14.500h3V21h-3z"/></svg>
<div class="t" style="left:193.87px;top:12px;width:90px;height:17px;line-height:17px;font-size:11.63px;color:#444746;-webkit-text-stroke:0.25px #444746;">100%</div>
<svg style="left:266.00px;top:19.00px" width="6" height="3.5" viewBox="0 0 8 4"><path d="M0 0h8l-4 4z" fill="#444746"/></svg>
<div style="left:284.0px;top:12px;width:1px;height:17px;background:#c7cacf;"></div>
<div class="t" style="left:267.50px;top:11px;width:66px;height:19px;line-height:19px;font-size:13px;color:#444746;transform:scaleX(0.899);">$</div>
<div class="t" style="left:293.13px;top:11px;width:69px;height:18px;line-height:18px;font-size:12px;color:#444746;transform:scaleX(0.867);">%</div>
<div class="t" style="left:318.00px;top:10px;width:68px;height:16px;line-height:16px;font-size:10.9px;color:#444746;transform:scaleX(0.935);-webkit-text-stroke:0.4px #444746;">.0</div>
<svg style="left:355px;top:23.250px" width="7" height="4.500" viewBox="0 0 7 4.500" fill="none" stroke="#444746" stroke-width="1.200"><path d="M7 2.250H1M2.800 0.400L0.900 2.250l1.900 1.850"/></svg>
<div class="t" style="left:345.00px;top:10px;width:74px;height:16px;line-height:16px;font-size:10.9px;color:#444746;transform:scaleX(0.924);-webkit-text-stroke:0.4px #444746;">.00</div>
<svg style="left:382px;top:23.250px" width="7" height="4.500" viewBox="0 0 7 4.500" fill="none" stroke="#444746" stroke-width="1.200"><path d="M0 2.250H6M4.200 0.400L6.100 2.250l-1.900 1.850"/></svg>
<div class="t" style="left:372.25px;top:12px;width:75px;height:16px;line-height:16px;font-size:10.6px;color:#444746;transform:scaleX(0.848);-webkit-text-stroke:0.25px #444746;">123</div>
<div style="left:426.0px;top:12px;width:1px;height:17px;background:#c7cacf;"></div>
<div class="t" style="left:410.55px;top:10px;width:105px;height:18px;line-height:18px;font-size:12.02px;color:#444746;-webkit-text-stroke:0.25px #444746;">Defaul...</div>
<svg style="left:497.50px;top:19.00px" width="6" height="3.5" viewBox="0 0 8 4"><path d="M0 0h8l-4 4z" fill="#444746"/></svg>
<div style="left:516.0px;top:12px;width:1px;height:17px;background:#c7cacf;"></div>
<div style="left:526.25px;top:19.5px;width:8.75px;height:1.1px;background:#444746;"></div>
<div style="left:544px;top:10.5px;width:28.5px;height:20px;background:transparent;border:1px solid #747775;border-radius:4px;"></div>
<div class="t" style="left:522.13px;top:12px;width:72px;height:16px;line-height:16px;font-size:11.3px;color:#1f1f1f;transform:scaleX(0.935);">10</div>
<div style="left:581px;top:20px;width:8px;height:1.1px;background:#444746;"></div>
<div style="left:584.5px;top:16.5px;width:1.1px;height:8px;background:#444746;"></div>
<div style="left:598.5px;top:12px;width:1px;height:17px;background:#c7cacf;"></div>
<div class="t" style="left:582.00px;top:12px;width:68px;height:18px;line-height:18px;font-size:12.5px;font-weight:bold;color:#444746;transform:scaleX(0.831);">B</div>
<svg style="left:636px;top:14px" width="14" height="14" viewBox="636 14 14 14" fill="none" stroke="#444746" stroke-width="1.5"><path d="M640.8 16.6H647.2M638.2 25.4H644.600M644.400 16.600L641 25.400"/></svg>
<div class="t" style="left:636.00px;top:12px;width:67px;height:18px;line-height:18px;font-size:12.5px;color:#444746;transform:scaleX(0.792);">S</div>
<div style="left:662.75px;top:19.6px;width:13.75px;height:1.2px;background:#444746;"></div>
<div style="left:664px;top:20.8px;width:11px;height:1.4px;background:#eef2f9;"></div>
<div class="t" style="left:663.62px;top:11px;width:68px;height:16px;line-height:16px;font-size:11.3px;color:#444746;transform:scaleX(1.028);-webkit-text-stroke:0.3px #444746;">A</div>
<div style="left:688.25px;top:26px;width:19px;height:2.5px;background:#000;"></div>
<div style="left:715.0px;top:12px;width:1px;height:17px;background:#c7cacf;"></div>
<svg style="left:722px;top:10px" width="18" height="16" viewBox="722 10 18 16"><path d="M727.6 12.4L734.3 18.6 730 22.8 725.7 18.5 730.4 14.2" fill="none" stroke="#444746" stroke-width="1.5"/><path d="M725.700 18.300H734.300L730 22.800z" fill="#444746"/><path d="M736.300 19.300q1.500 2 1.500 2.700a1.500 1.500 0 0 1-3 0q0-.7 1.500-2.700z" fill="#444746"/></svg>
<div style="left:721px;top:26.3px;width:21px;height:1.6px;background:#f7f4f2;"></div>
<svg style="left:753.00px;top:13.00px" width="16" height="16" viewBox="0 0 24 24" fill="none" stroke="#444746" stroke-width="2" stroke-linejoin="miter"><path d="M4 4h16v16H4zM12 4v16M4 12h16"/></svg>
<svg style="left:780.00px;top:12.00px" width="18" height="18" viewBox="0 0 24 24" fill="none" stroke="#b4b8bd" stroke-width="2" stroke-linejoin="miter"><path d="M9 5H5v4M15 5h4v4M9 19H5v-4M15 19h4v-4M3.500 12h7M8 9l3 3-3 3M20.500 12h-7M16 9l-3 3 3 3" stroke-width="1.6"/></svg>
<svg style="left:803.50px;top:19.00px" width="6" height="3.5" viewBox="0 0 8 4"><path d="M0 0h8l-4 4z" fill="#b4b8bd"/></svg>
<div style="left:815.5px;top:12px;width:1px;height:17px;background:#c7cacf;"></div>
<svg style="left:822.30px;top:12.50px" width="17" height="17" viewBox="0 0 24 24" fill="none" stroke="#444746" stroke-width="2" stroke-linejoin="miter"><path d="M3.500 3.700h17M3.500 7.850h11.500M3.500 12h17M3.500 16.150h11.500M3.500 20.300h17" stroke-width="1.9"/></svg>
<svg style="left:843.20px;top:19.00px" width="6" height="3.5" viewBox="0 0 8 4"><path d="M0 0h8l-4 4z" fill="#444746"/></svg>
<svg style="left:856.30px;top:12.50px" width="17" height="17" viewBox="0 0 24 24" fill="none" stroke="#444746" stroke-width="2" stroke-linejoin="miter"><path d="M5 20.500h14M12 3.500V15M7.500 11L12 15.500 16.500 11"/></svg>
<svg style="left:878.00px;top:19.00px" width="6" height="3.5" viewBox="0 0 8 4"><path d="M0 0h8l-4 4z" fill="#444746"/></svg>
<svg style="left:892.05px;top:13.25px" width="15.5" height="15.5" viewBox="0 0 24 24" fill="none" stroke="#444746" stroke-width="2" stroke-linejoin="miter"><path d="M4 4v16M8.500 12h11M15.500 7.500L20 12l-4.500 4.500M11.500 4v4M11.500 16V20"/></svg>
<svg style="left:912.80px;top:19.00px" width="6" height="3.5" viewBox="0 0 8 4"><path d="M0 0h8l-4 4z" fill="#444746"/></svg>
<div class="t" style="left:901.50px;top:11px;width:66px;height:16px;line-height:16px;font-size:10.5px;color:#444746;transform:scaleX(0.928);-webkit-text-stroke:0.3px #444746;">A</div>
<svg style="left:929.500px;top:22.600px" width="12" height="4" viewBox="0 0 12 4" fill="none" stroke="#444746" stroke-width="1.3"><path d="M0.500 2H10.500M8.300 0L10.600 2l-2.300 2"/></svg>
<svg style="left:947.00px;top:19.00px" width="6" height="3.5" viewBox="0 0 8 4"><path d="M0 0h8l-4 4z" fill="#444746"/></svg>
<div style="left:960.0px;top:12px;width:1px;height:17px;background:#c7cacf;"></div>
<svg style="left:968.95px;top:12.75px" width="16.5" height="16.5" viewBox="0 0 24 24" fill="none" stroke="#444746" stroke-width="2" stroke-linejoin="miter"><path d="M10.500 7.500H7.500a4.500 4.500 0 0 0 0 9h3M13.500 7.500h3a4.500 4.500 0 0 1 0 9h-3M8 12h8"/></svg>
<svg style="left:995.50px;top:12.50px" width="17" height="17" viewBox="0 0 24 24" fill="none" stroke="#444746" stroke-width="2" stroke-linejoin="miter"><path d="M3.500 3.500h17v13.500H8L3.500 21zM12 6.500v7.500M8.250 10.250h7.500"/></svg>
<svg style="left:1023.20px;top:13.00px" width="16" height="16" viewBox="0 0 24 24" fill="none" stroke="#444746" stroke-width="2" stroke-linejoin="miter"><rect x="3.500" y="3.500" width="17" height="17" rx="2"/><path d="M8 17v-6M12 17V7M16 17v-3.500" stroke-width="1.8"/></svg>
<svg style="left:1049.70px;top:12.50px" width="17" height="17" viewBox="0 0 24 24" fill="none" stroke="#444746" stroke-width="2" stroke-linejoin="miter"><path d="M4.500 4.500h15L13.500 12.500V19.500h-3V12.500z"/></svg>
<svg style="left:1074.50px;top:12.50px" width="17" height="17" viewBox="0 0 24 24" fill="none" stroke="#444746" stroke-width="2" stroke-linejoin="miter"><path d="M3.500 16.500v-13h13"/><rect x="7.500" y="7.500" width="13.500" height="13.500" rx="1"/><path d="M7.500 12.500h13.500M7.500 16.800h13.500M12 12.500V21M16.500 12.500V21" stroke-width="1.4"/></svg>
<svg style="left:1096.20px;top:19.00px" width="6" height="3.5" viewBox="0 0 8 4"><path d="M0 0h8l-4 4z" fill="#444746"/></svg>
<div class="t" style="left:1086.50px;top:12px;width:68px;height:19px;line-height:19px;font-size:13px;font-weight:bold;color:#444746;transform:scaleX(1.026);">Σ</div>
<div class="t" style="left:-18.00px;top:48px;width:79px;height:16px;line-height:16px;font-size:11.5px;color:#202124;transform:scaleX(0.929);">V27</div>
<svg style="left:73px;top:54.5px" width="7" height="3.5" viewBox="0 0 8 4"><path d="M0 0h8l-4 4z" fill="#444746"/></svg>
<div style="left:89.75px;top:48px;width:1px;height:16px;background:#e3e5e8;"></div>
<div class="t" style="left:69.77px;top:46px;width:72px;height:19px;line-height:19px;font-size:13px;font-style:italic;color:#9aa0a6;transform:scaleX(1.142);font-family:'Liberation Serif',serif;-webkit-text-stroke:0.3px #9aa0a6;">fx</div>
</div></body></html>
